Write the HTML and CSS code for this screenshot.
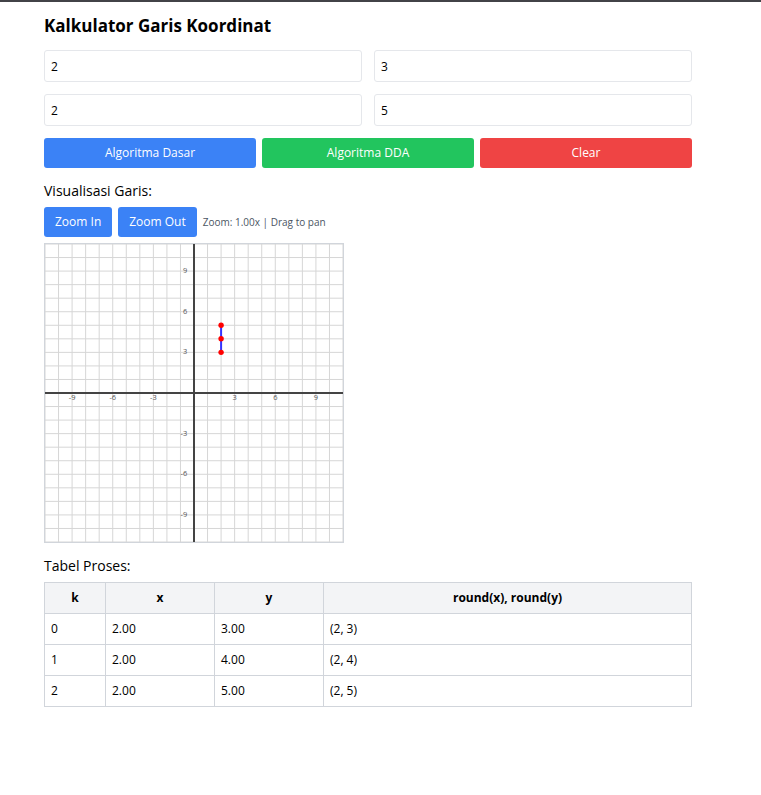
FILE: index.html
```html
<!DOCTYPE html>
<html lang="id">
<head>
<meta charset="utf-8">
<title>Kalkulator Garis Koordinat</title>
<link rel="stylesheet" href="styles.css">
</head>
<body>
<main class="container">
  <h1 class="title">Kalkulator Garis Koordinat</h1>
  <form class="form">
    <div class="fields">
      <input class="field" type="text" inputmode="numeric" aria-label="x1" value="2">
      <input class="field" type="text" inputmode="numeric" aria-label="y1" value="3">
      <input class="field" type="text" inputmode="numeric" aria-label="x2" value="2">
      <input class="field" type="text" inputmode="numeric" aria-label="y2" value="5">
    </div>
    <div class="actions">
      <button class="btn btn-blue" type="button">Algoritma Dasar</button>
      <button class="btn btn-green" type="button">Algoritma DDA</button>
      <button class="btn btn-red" type="button">Clear</button>
    </div>
  </form>

  <section class="section">
    <h2 class="subtitle">Visualisasi Garis:</h2>
    <div class="toolbar">
      <button class="btn btn-blue" type="button">Zoom In</button>
      <button class="btn btn-blue" type="button">Zoom Out</button>
      <span class="hint">Zoom: 1.00x | Drag to pan</span>
    </div>
    <svg class="plot" viewBox="-220 -220 440 440" role="img" aria-label="Garis">
      <path class="grid" d="M-220-220v440M-200-220v440M-180-220v440M-160-220v440M-140-220v440M-120-220v440M-100-220v440M-80-220v440M-60-220v440M-40-220v440M-20-220v440M20-220v440M40-220v440M60-220v440M80-220v440M100-220v440M120-220v440M140-220v440M160-220v440M180-220v440M200-220v440M220-220v440"/>
      <path class="grid" d="M-220-220h440M-220-200h440M-220-180h440M-220-160h440M-220-140h440M-220-120h440M-220-100h440M-220-80h440M-220-60h440M-220-40h440M-220-20h440M-220 20h440M-220 40h440M-220 60h440M-220 80h440M-220 100h440M-220 120h440M-220 140h440M-220 160h440M-220 180h440M-220 200h440M-220 220h440"/>
      <g class="labels-x">
        <text x="-180" y="10">-9</text><text x="-120" y="10">-6</text><text x="-60" y="10">-3</text>
        <text x="60" y="10">3</text><text x="120" y="10">6</text><text x="180" y="10">9</text>
      </g>
      <g class="labels-y">
        <text x="-10" y="-177">9</text><text x="-10" y="-117">6</text><text x="-10" y="-57">3</text>
        <text x="-10" y="63">-3</text><text x="-10" y="123">-6</text><text x="-10" y="183">-9</text>
      </g>
      <path class="axis" d="M-220 0h440M0-220v440"/>
      <path class="line" d="M40-60v-40"/>
      <g class="points">
        <circle cx="40" cy="-60" r="4"/><circle cx="40" cy="-80" r="4"/><circle cx="40" cy="-100" r="4"/>
      </g>
    </svg>
  </section>

  <section class="section">
    <h2 class="subtitle">Tabel Proses:</h2>
    <table class="table">
      <colgroup><col class="col-k"><col class="col-n"><col class="col-n"><col></colgroup>
      <thead><tr><th>k</th><th>x</th><th>y</th><th>round(x), round(y)</th></tr></thead>
      <tbody>
        <tr><td>0</td><td>2.00</td><td>3.00</td><td>(2, 3)</td></tr>
        <tr><td>1</td><td>2.00</td><td>4.00</td><td>(2, 4)</td></tr>
        <tr><td>2</td><td>2.00</td><td>5.00</td><td>(2, 5)</td></tr>
      </tbody>
    </table>
  </section>
</main>
</body>
</html>
```
FILE: styles.css
```css
*, *::before, *::after { box-sizing: border-box; }

body {
  margin: 0;
  padding-right: 25px;
  border-top: 2px solid #424347;
  background: #fff;
  color: #000;
  font-family: "Segoe UI", "Open Sans", "Noto Sans", sans-serif;
  font-size: 12px;
  line-height: 18px;
}

/* The top rule spans the full window, the content sits left of the scrollbar gutter. */
.container {
  max-width: 672px;
  margin: 0 auto;
  padding: 12px;
}

.title {
  margin: 0 0 12px;
  font-size: 17px;
  line-height: 24px;
  font-weight: 700;
}

.fields {
  display: grid;
  grid-template-columns: 1fr 1fr;
  gap: 12px;
  margin-bottom: 12px;
}

.field {
  width: 100%;
  height: 32px;
  padding: 6px;
  border: 1px solid #e5e7eb;
  border-radius: 3px;
  background: #fff;
  color: inherit;
  font: inherit;
}

.actions {
  display: grid;
  grid-template-columns: repeat(3, 1fr);
  gap: 6px;
}

.btn {
  height: 30px;
  padding: 0 11px;
  border: 0;
  border-radius: 3px;
  color: #fff;
  font: inherit;
}

.btn-blue { background: #3b82f6; }
.btn-green { background: #22c55e; }
.btn-red { background: #ef4444; }

.section { margin-top: 12px; }

.subtitle {
  margin: 0 0 6px;
  font-size: 14px;
  line-height: 21px;
  font-weight: 500;
}

.toolbar {
  display: flex;
  align-items: center;
  gap: 6px;
  margin-bottom: 6px;
}

.hint {
  color: #4b5563;
  font-size: 10px;
}

.plot {
  display: block;
  width: 100%;
  max-width: 300px;
  border: 1px solid #d1d5db;
}

.grid, .axis, .line { fill: none; vector-effect: non-scaling-stroke; }
.grid { stroke: #d6d6d6; stroke-width: 1px; }
.axis { stroke: #444; stroke-width: 2px; }
.line { stroke: #33f; stroke-width: 2px; }
.points { fill: #f00; }
.labels-x, .labels-y { fill: #555; font-size: 11px; }
.labels-x { text-anchor: middle; }
.labels-y { text-anchor: end; }

.table {
  width: 100%;
  table-layout: fixed;
  border-collapse: collapse;
}

.col-k { width: 61px; }
.col-n { width: 109px; }

.table th, .table td {
  padding: 6px;
  border: 1px solid #d1d5db;
  text-align: left;
}

.table th {
  background: #f3f4f6;
  font-weight: 700;
  text-align: center;
}
```
